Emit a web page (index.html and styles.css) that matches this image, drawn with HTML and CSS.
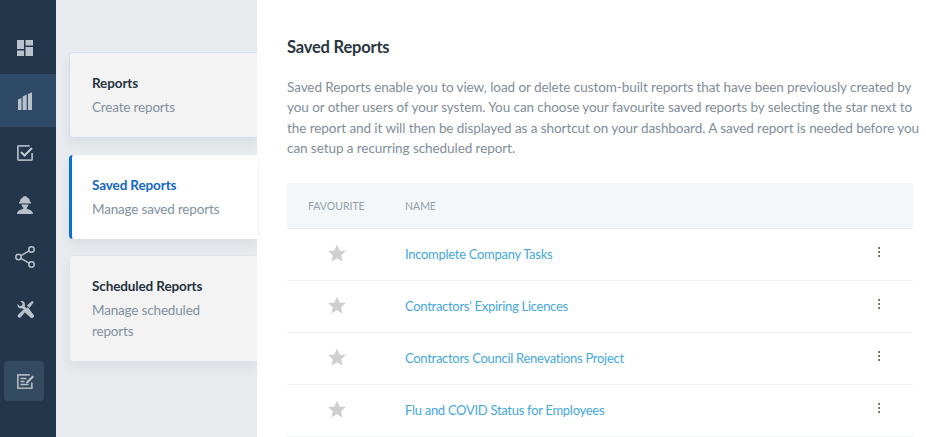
FILE: index.html
```html
<!DOCTYPE html>
<html lang="en">
<head>
<meta charset="utf-8">
<title>Saved Reports</title>
<link rel="stylesheet" href="styles.css">
</head>
<body>
<div class="app">
  <nav class="rail">
    <a class="rail-item"><svg class="ico i-dash" viewBox="0 0 16 16"><path d="M0 0h7v9H0zM0 10.500h7V16H0zM8.500 0H16v5.500H8.500zM8.500 7H16v9H8.500z"/></svg></a>
    <a class="rail-item active"><svg class="ico i-bars" viewBox="0 0 14.500 18"><path d="M0 7.500L3.500 6v12H0zM4.700 4.500L8.700 2.500V18h-4zM10 2L14.500 0v18H10z"/></svg></a>
    <a class="rail-item"><svg class="ico i-check" viewBox="0 0 16 16"><path class="line box" d="M15.100 8v6.300a.8.800 0 0 1-.8.800H1.700a.8.800 0 0 1-.8-.8V1.700a.8.800 0 0 1 .8-.8h11"/><path class="line thick" d="M4 7l3.500 3.500L15 3"/></svg></a>
    <a class="rail-item"><svg class="ico i-worker" viewBox="0 0 18 18"><path d="M7.300 .3h3.400v1A5 5 0 0 1 14 6h1v1.500H3V6h1a5 5 0 0 1 3.300-4.700zM5.500 8.500h7a3.500 3.500 0 0 1-1.700 3V13c3 .5 6.200 2 6.200 5H1c0-3 3.200-4.500 6.200-5v-1.500a3.500 3.500 0 0 1-1.700-3z"/></svg></a>
    <a class="rail-item"><svg class="ico i-share" viewBox="0 0 20 22"><circle class="line" cx="3.500" cy="11" r="2.700"/><circle class="line" cx="16.500" cy="3.500" r="2.700"/><circle class="line" cx="16.500" cy="18.500" r="2.700"/><path class="line" d="M5.900 9.600L14.100 4.900M5.900 12.400L14.100 17.100"/></svg></a>
    <a class="rail-item"><svg class="ico i-tools" viewBox="0 0 18 18"><path d="M.6 3.300L3 5.600 5.400 4.800 6 2.600 3.600.2C6.400-.6 8.800 1.200 8.400 4.300L8 5.500l2.300 2.300 1.200-1.200 5.800 7.800a2 2 0 0 1-3 3L6.500 10.300 7.400 9 5.200 7.800C2.300 8.300 0 6.200.6 3.300z"/><path d="M17.800 1.300L16 0l-5.500 4.800 2.500 2.500zM6.800 8.900l2.300 2.300-4.900 5.800a1.900 1.900 0 0 1-3-2.500z"/></svg></a>
    <a class="rail-item boxed"><svg class="ico i-edit" viewBox="0 0 17 15"><path class="line box" d="M14.800 8.500v5.800H.8V.8h12"/><path class="line" d="M3.500 4.500h6M3.500 7.500h4M3.500 10.500h8"/><path d="M15.500 1.500L17 3l-6 6-2.200.6.700-2.100z"/></svg></a>
  </nav>

  <aside class="menu">
    <div class="card first"><h3>Reports</h3><p>Create reports</p></div>
    <div class="card current"><h3>Saved Reports</h3><p>Manage saved reports</p></div>
    <div class="card"><h3>Scheduled Reports</h3><p>Manage scheduled<br>reports</p></div>
  </aside>

  <main class="content">
    <h1>Saved Reports</h1>
    <p class="intro">Saved Reports enable you to view, load or delete custom-built reports that have been previously created by<br>you or other users of your system. You can choose your favourite saved reports by selecting the star next to<br>the report and it will then be displayed as a shortcut on your dashboard. A saved report is needed before you<br>can setup a recurring scheduled report.</p>
    <div class="table">
      <div class="row head"><span class="fav">FAVOURITE</span><span class="name">NAME</span></div>
      <div class="row"><span class="fav"><svg class="star" viewBox="0 0 24 24"><path d="M12 .8l3.500 7.700 8.300.9-6.200 5.600 1.700 8.200L12 19.100l-7.300 4.100 1.700-8.200L.2 9.400l8.300-.9z"/></svg></span><a class="name">Incomplete Company Tasks</a><svg class="more" viewBox="0 0 2 10"><path class="o" d="M0 0h1v2H0zM0 4h1v2H0zM0 8h1v2H0z"/><path class="b" d="M1 0h1v2H1zM1 4h1v2H1zM1 8h1v2H1z"/></svg></div>
      <div class="row"><span class="fav"><svg class="star" viewBox="0 0 24 24"><path d="M12 .8l3.500 7.700 8.300.9-6.200 5.600 1.700 8.200L12 19.100l-7.300 4.100 1.700-8.200L.2 9.400l8.300-.9z"/></svg></span><a class="name">Contractors' Expiring Licences</a><svg class="more" viewBox="0 0 2 10"><path class="o" d="M0 0h1v2H0zM0 4h1v2H0zM0 8h1v2H0z"/><path class="b" d="M1 0h1v2H1zM1 4h1v2H1zM1 8h1v2H1z"/></svg></div>
      <div class="row"><span class="fav"><svg class="star" viewBox="0 0 24 24"><path d="M12 .8l3.500 7.700 8.300.9-6.200 5.600 1.700 8.200L12 19.100l-7.300 4.100 1.700-8.200L.2 9.400l8.300-.9z"/></svg></span><a class="name">Contractors Council Renevations Project</a><svg class="more" viewBox="0 0 2 10"><path class="o" d="M0 0h1v2H0zM0 4h1v2H0zM0 8h1v2H0z"/><path class="b" d="M1 0h1v2H1zM1 4h1v2H1zM1 8h1v2H1z"/></svg></div>
      <div class="row"><span class="fav"><svg class="star" viewBox="0 0 24 24"><path d="M12 .8l3.500 7.700 8.300.9-6.200 5.600 1.700 8.200L12 19.100l-7.300 4.100 1.700-8.200L.2 9.400l8.300-.9z"/></svg></span><a class="name">Flu and COVID Status for Employees</a><svg class="more" viewBox="0 0 2 10"><path class="o" d="M0 0h1v2H0zM0 4h1v2H0zM0 8h1v2H0z"/><path class="b" d="M1 0h1v2H1zM1 4h1v2H1zM1 8h1v2H1z"/></svg></div>
    </div>
  </main>
</div>
</body>
</html>
```
FILE: styles.css
```css
* { box-sizing: border-box; margin: 0; padding: 0; }
html, body { height: 100%; overflow: hidden; background: #fff; }
body { font-family: "Lato", "Noto Sans", sans-serif; font-size: 14px; color: #7b8a97; }
.app { display: flex; height: 437px; width: 926px; overflow: hidden; }

.rail { width: 56px; flex: none; background: #23364b; display: flex; flex-direction: column; padding-top: 22px; }
.rail-item { width: 56px; height: 52px; flex: none; display: flex; align-items: center; justify-content: center; padding-right: 6px; }
.rail-item.active { height: 53px; background: #2f4a66; }
.rail-item.boxed { width: 40px; height: 40px; margin: 26px 0 0 4px; padding: 0 0 0 2px; border-radius: 4px; background: #344a60; }
.ico { fill: #b9c2cb; display: block; }
.i-dash { width: 16px; height: 16px; }
.i-bars { width: 14.500px; height: 18px; }
.i-check { width: 16px; height: 16px; }
.i-worker { width: 18px; height: 18px; }
.i-share { width: 20px; height: 22px; }
.i-tools { width: 17px; height: 17px; }
.i-edit { width: 17px; height: 15px; }
.line { fill: none; stroke: #b9c2cb; stroke-width: 1.500; }
.box { stroke: #a9b4be; stroke-width: 1.800; }
.thick { stroke: #c4cbd2; stroke-width: 2; }

.menu { width: 201px; flex: none; background: #e8ebee; padding: 52px 0 0 13px; display: flex; flex-direction: column; gap: 17px; }
.card { background: #f3f3f4; border: 1px solid #dfe5ec; border-right: 0; border-radius: 4px 0 0 4px; padding: 20px 0 0 22px; height: 107px; box-shadow: 0 6px 10px rgba(60, 70, 85, .07); }
.card.first { height: 86px; border-color: #d3e0f3; }
.card.current { height: 84px; background: #fff; border: 0; border-left: 3px solid #0a6fd0; padding-left: 20px; padding-top: 20px; margin-bottom: -1px; }
.card h3 { font-size: 13.500px; line-height: 20px; font-weight: 700; color: #26333f; letter-spacing: -.12px; }
.card.current h3 { color: #1266c4; }
.card p { font-size: 13.500px; line-height: 21px; margin-top: 4px; color: #82919e; letter-spacing: -.17px; }

.content { flex: 1; padding: 37px 0 0 30px; min-width: 0; }
h1 { font-size: 16.500px; line-height: 21px; font-weight: 700; color: #2b3640; letter-spacing: -.2px; }
.intro { margin-top: 19px; font-size: 13.500px; line-height: 20.400px; white-space: nowrap; color: #7f8d99; letter-spacing: -.07px; }
.table { margin-top: 24px; width: 626px; }
.row { height: 52px; display: flex; align-items: center; border-bottom: 1px solid #eff1f3; position: relative; }
.row.head { height: 46px; padding-top: 2px; background: #f3f7fa; border-bottom-color: #e9ecf1; font-size: 10.500px; color: #93a0aa; }
.fav { width: 118px; padding-left: 21px; flex: none; }
.row .fav { display: flex; }
.star { width: 18px; height: 18px; margin: 0 0 2px 20px; fill: #cfcfd1; }
.name { font-size: 13px; color: #45a7df; letter-spacing: -.29px; }
.head .name { font-size: 10.500px; color: #93a0aa; letter-spacing: 0; }
.more { position: absolute; left: 591px; top: 18px; width: 2px; height: 10px; }
.o { fill: #c8861a; }
.b { fill: #1f7fae; }
```
